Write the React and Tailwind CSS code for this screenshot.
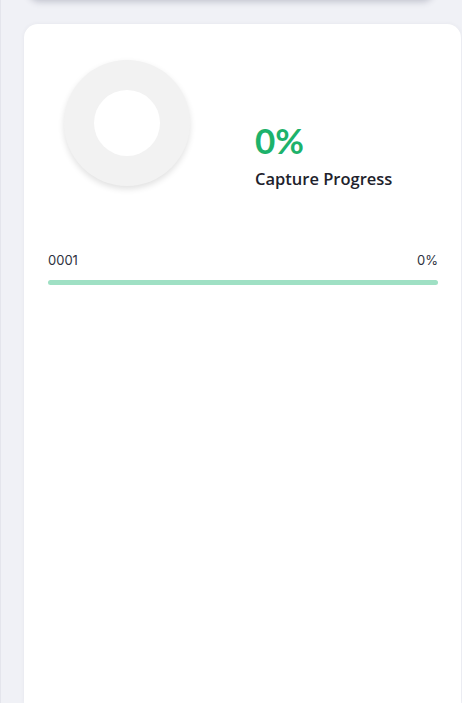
export default function App() {
    return (
        <div
            className="min-h-[703px] h-[703px] overflow-hidden bg-[#f0f1f6] relative"
            style={{ fontFamily: "Inter, 'Open Sans', sans-serif" }}
        >
            {/* card above, mostly scrolled out of view */}
            <div className="mx-[28px] h-[40px] -mt-[40px] bg-white rounded-b-xl shadow-[0_2px_6px_rgba(60,64,90,0.25)]" />

            <div className="flex h-full">
                {/* left column edge */}
                <div className="w-[24px] shrink-0 border-l border-[#e4e5ec]" />

                {/* main card */}
                <div className="mt-[24px] w-[437px] bg-white rounded-t-[14px] shadow-[0_0_4px_rgba(60,64,90,0.06)] px-[24px]">
                    <div className="flex items-start pt-[36px]">
                        {/* donut */}
                        <div className="w-[126px] h-[126px] ml-[16px] shrink-0 rounded-full bg-[#f2f2f2] shadow-[0_3px_6px_rgba(0,0,0,0.12)] flex items-center justify-center">
                            <div className="w-[66px] h-[66px] rounded-full bg-white" />
                        </div>

                        <div className="ml-[65px] mt-[60px]">
                            <div
                                className="text-[35px] leading-[40px] font-bold text-[#1db26b]"
                                style={{ fontFamily: "Lato, sans-serif" }}
                            >
                                0%
                            </div>
                            <div
                                className="mt-[8px] text-[16.5px] leading-[22px] font-semibold text-[#1e222c]"
                                style={{ fontFamily: "'Open Sans', sans-serif" }}
                            >
                                Capture Progress
                            </div>
                        </div>
                    </div>

                    {/* progress row */}
                    <div className="mt-[61px] w-[390px]">
                        <div className="flex justify-between text-[13px] leading-[18px] text-[#2e3240]">
                            <span>0001</span>
                            <span>0%</span>
                        </div>
                        <div className="mt-[11px] h-[5px] rounded-full bg-[#9fe0c4]" />
                    </div>
                </div>
            </div>
        </div>
    );
}
